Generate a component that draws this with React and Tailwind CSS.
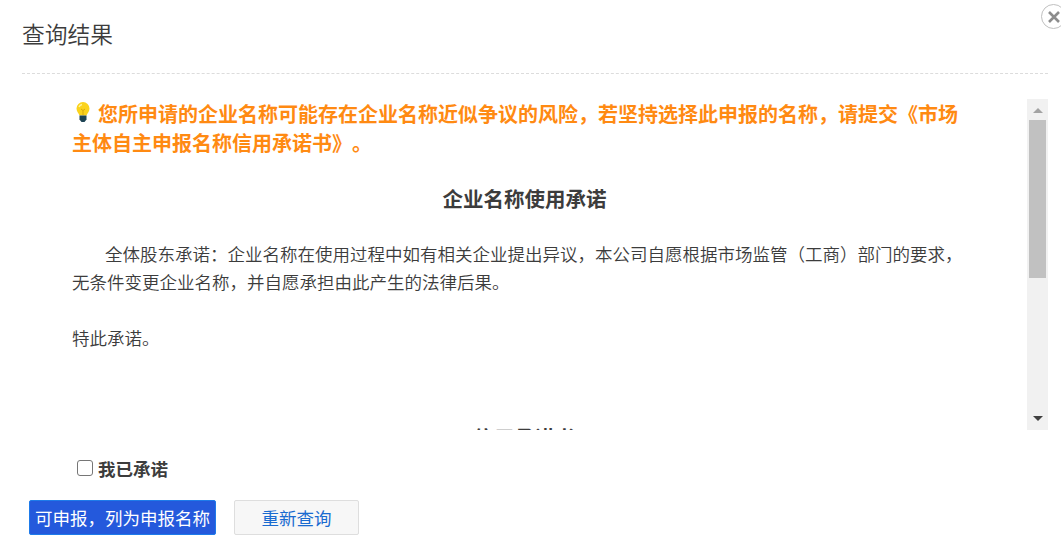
import React, { useState } from 'react';

function BulbIcon() {
    return (
        <svg viewBox="0 0 16 22" className="mr-[7px] ml-[3px] inline-block h-[22px] w-4 align-[-1px]">
            <path d="M8 1a6.500 6.500 0 0 0-6.500 6.500c0 3 2 4.500 3 7h7c1-2.500 3-4 3-7A6.500 6.500 0 0 0 8 1z" fill="#fbd31c" />
            <path d="M4 6a4 4 0 0 1 3-2.500" stroke="#fff3a0" strokeWidth="1.4" fill="none" />
            <path d="M6 8l2 1.500L10 8M8 9.500V14" stroke="#d9a90c" strokeWidth="1" fill="none" />
            <path d="M4.500 14.500h7v4L9.500 21h-3l-2-2.500z" fill="#1d4354" />
        </svg>
    );
}

function ScrollBar() {
    return (
        <div className="flex h-[331px] w-[21px] flex-col items-center bg-[#f1f1f1]">
            <div className="flex h-[21px] items-center">
                <svg viewBox="0 0 10 6" className="h-[6px] w-[10px]"><path d="M0 6L5 1l5 5z" fill="#a3a3a3" /></svg>
            </div>
            <div className="h-[158px] w-[17px] bg-[#c1c1c1]" />
            <div className="mt-auto flex h-[22px] items-center">
                <svg viewBox="0 0 10 6" className="h-[6px] w-[10px]"><path d="M0 0h10L5 5z" fill="#404040" /></svg>
            </div>
        </div>
    );
}

function App() {
    const [checked, setChecked] = useState(false);

    return (
        <div className="relative h-[554px] w-[1061px] overflow-hidden bg-white font-['Noto_Sans_CJK_SC',sans-serif] text-[17.5px] leading-[28px] text-[#3c3c3c] [text-spacing-trim:space-all]">
            {/* Close */}
            <button className="absolute top-1 left-[1041px] flex h-[25px] w-[25px] items-center justify-center rounded-full border border-[#c0c0c0] bg-white">
                <svg viewBox="0 0 12 12" className="h-3 w-3"><path d="M1 1l10 10M11 1L1 11" stroke="#8c8c8c" strokeWidth="2.6" /></svg>
            </button>

            <div className="mr-[13px] ml-[22px] h-[74px] border-b border-dashed border-[#dcdcdc] pt-[17px]">
                <h2 className="text-[22.75px] leading-[34px] font-[350]">查询结果</h2>
            </div>

            {/* Notice */}
            <div className="mt-[25px] mr-[13px] ml-[72px] flex h-[331px] justify-between overflow-hidden">
                <div className="w-[905px]">
                    <p className="pt-px text-[20px] leading-[28.5px] font-bold whitespace-nowrap text-[#ff8a12]">
                        <BulbIcon />您所申请的企业名称可能存在企业名称近似争议的风险，若坚持选择此申报的名称，请提交《市场<br />
                        主体自主申报名称信用承诺书》。
                    </p>
                    <h3 className="mt-[27px] text-center text-[20.5px] leading-[28px] font-bold">企业名称使用承诺</h3>
                    <p className="mt-[28px] indent-[33px] font-[350] whitespace-nowrap">
                        全体股东承诺：企业名称在使用过程中如有相关企业提出异议，本公司自愿根据市场监管（工商）部门的要求，
                    </p>
                    <p className="font-[350]">无条件变更企业名称，并自愿承担由此产生的法律后果。</p>
                    <p className="mt-[28px] font-[350]">特此承诺。</p>
                    <h3 className="mt-[71px] text-center text-[20.5px] leading-[28px] font-bold">信用承诺书</h3>
                </div>
                <ScrollBar />
            </div>

            <label className="mt-[25px] ml-[77px] flex h-[28px] w-fit items-center gap-[5px] font-bold">
                <input
                    type="checkbox"
                    checked={checked}
                    onChange={() => setChecked(!checked)}
                    className="mb-[3px] h-4 w-4 appearance-none rounded-[3px] border border-[#767676] bg-white checked:bg-[#2459dc]"
                />
                我已承诺
            </label>

            <div className="mt-[17px] ml-[29px] flex gap-[18px]">
                <button className="h-[35px] w-[187px] rounded-[2px] border border-[#1e7bea] bg-[#2459dc] text-white">可申报，列为申报名称</button>
                <button className="h-[35px] w-[125px] rounded-[2px] border border-[#dedede] bg-[#f7f7f7] text-[#1a6bd0]">重新查询</button>
            </div>
        </div>
    );
}

export default App;
